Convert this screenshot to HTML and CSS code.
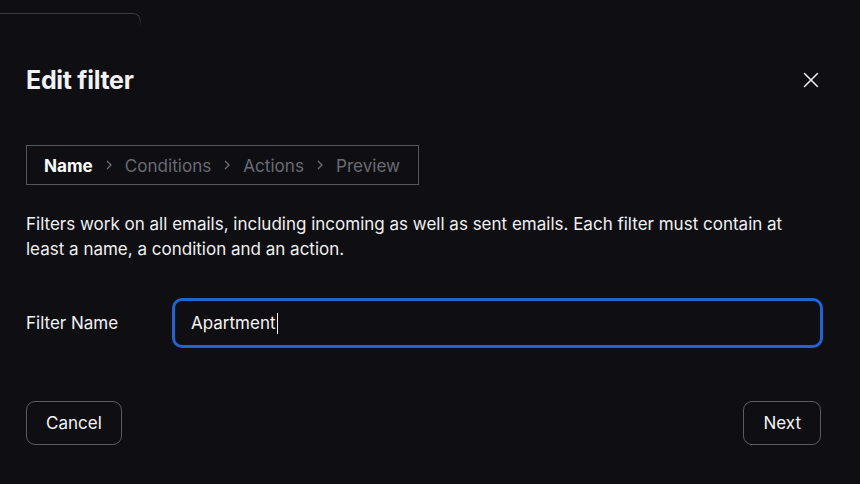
FILE: index.html
```html
<!DOCTYPE html>
<html>
<head>
<meta charset="utf-8">
<link rel="stylesheet" href="styles.css">
</head>
<body>
<div class="behind"></div>
<div class="dialog">
  <div class="header">
    <h1 class="title">Edit filter</h1>
    <button class="close" aria-label="Close">
      <svg width="16" height="16" viewBox="0 0 16 16"><path d="M1.5 1.5L14.5 14.5M14.5 1.5L1.5 14.5" stroke="#f2f2f2" stroke-width="1.5" stroke-linecap="round"/></svg>
    </button>
  </div>
  <nav class="steps">
    <span class="step active">Name</span>
    <span class="chev"><svg width="8" height="12" viewBox="0 0 8 12"><path d="M2 2l4 4-4 4" fill="none" stroke="#6e6e75" stroke-width="1.3"/></svg></span>
    <span class="step">Conditions</span>
    <span class="chev"><svg width="8" height="12" viewBox="0 0 8 12"><path d="M2 2l4 4-4 4" fill="none" stroke="#6e6e75" stroke-width="1.3"/></svg></span>
    <span class="step">Actions</span>
    <span class="chev"><svg width="8" height="12" viewBox="0 0 8 12"><path d="M2 2l4 4-4 4" fill="none" stroke="#6e6e75" stroke-width="1.3"/></svg></span>
    <span class="step">Preview</span>
  </nav>
  <p class="desc">Filters work on all emails, including incoming as well as sent emails. Each filter must contain at least a name, a condition and an action.</p>
  <div class="field">
    <label class="label">Filter Name</label>
    <div class="input"><span class="value">Apartment</span><span class="caret"></span></div>
  </div>
  <div class="footer">
    <button class="btn">Cancel</button>
    <button class="btn">Next</button>
  </div>
</div>
</body>
</html>
```
FILE: styles.css
```css
html, body {
  margin: 0;
  padding: 0;
  background: #0f0f13;
  width: 860px;
  height: 484px;
  overflow: hidden;
  font-family: Inter, "Liberation Sans", sans-serif;
  color: #f2f2f4;
}
.behind {
  position: absolute;
  left: -10px;
  top: 13px;
  width: 150px;
  height: 30px;
  border-top: 1px solid #3a3a42;
  border-right: 1px solid #3a3a42;
  border-top-right-radius: 8px;
  -webkit-mask-image: linear-gradient(to bottom, #000 0, #000 4px, transparent 14px);
  mask-image: linear-gradient(to bottom, #000 0, #000 4px, transparent 14px);
}
.dialog {
  position: relative;
  padding: 0 37px 0 26px;
}
.header {
  display: flex;
  justify-content: space-between;
  align-items: center;
  padding-top: 64px;
  height: 32px;
}
.title {
  margin: 0;
  font-size: 25px;
  font-weight: 700;
  letter-spacing: -0.3px;
  line-height: 32px;
}
.close {
  background: none;
  border: 0;
  padding: 0;
  margin-right: 4px;
  width: 16px;
  height: 16px;
  display: flex;
}
.steps {
  margin-top: 49px;
  display: inline-flex;
  align-items: center;
  gap: 12px;
  border: 1px solid #55555c;
  height: 38px;
  padding: 0 18px 0 17px;
  font-size: 17.1px;
  color: #6a6a72;
}
.step.active {
  color: #ffffff;
  font-weight: 700;
}
.chev { display: flex; }
.desc {
  margin: 27px 0 0;
  max-width: 780px;
  font-size: 17px;
  line-height: 25px;
  color: #f0f0f2;
}
.field {
  margin-top: 36px;
  display: flex;
  align-items: center;
}
.label {
  width: 146px;
  font-size: 17px;
}
.input {
  flex: 1;
  height: 44px;
  border: 3px solid #1f63d4;
  border-radius: 10px;
  display: flex;
  align-items: center;
  padding-left: 16px;
  font-size: 17px;
  color: #f4f4f6;
}
.caret {
  width: 1px;
  height: 21px;
  background: #f4f4f6;
  margin-left: 1px;
}
.footer {
  margin-top: 53px;
  margin-right: 2px;
  display: flex;
  justify-content: space-between;
}
.btn {
  height: 44px;
  padding: 0 19px;
  background: transparent;
  border: 1px solid #5a5a62;
  border-radius: 9px;
  color: #f4f4f6;
  font-family: Inter, "Liberation Sans", sans-serif;
  font-size: 17px;
}
```
